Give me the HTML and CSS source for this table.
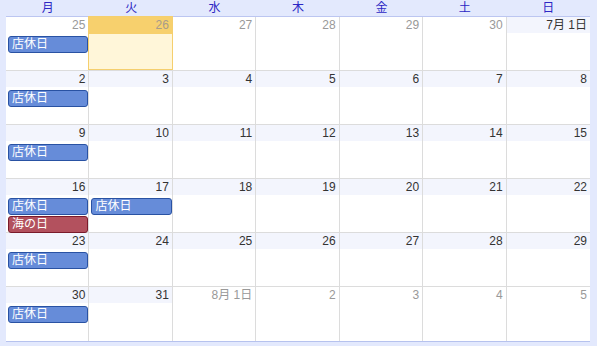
FILE: index.html
```html
<!DOCTYPE html>
<html lang="ja">
<head>
<meta charset="utf-8">
<link rel="stylesheet" href="styles.css">
</head>
<body>
<div class="cal">
  <div class="head">
    <div>月</div><div>火</div><div>水</div><div>木</div><div>金</div><div>土</div><div>日</div>
  </div>
  <div class="grid">
    <div class="week">
      <div class="day other"><div class="num">25</div><div class="ev blue">店休日</div></div>
      <div class="day other today"><div class="num">26</div></div>
      <div class="day other"><div class="num">27</div></div>
      <div class="day other"><div class="num">28</div></div>
      <div class="day other"><div class="num">29</div></div>
      <div class="day other"><div class="num">30</div></div>
      <div class="day"><div class="num">7月 1日</div></div>
    </div>
    <div class="week">
      <div class="day"><div class="num">2</div><div class="ev blue">店休日</div></div>
      <div class="day"><div class="num">3</div></div>
      <div class="day"><div class="num">4</div></div>
      <div class="day"><div class="num">5</div></div>
      <div class="day"><div class="num">6</div></div>
      <div class="day"><div class="num">7</div></div>
      <div class="day"><div class="num">8</div></div>
    </div>
    <div class="week">
      <div class="day"><div class="num">9</div><div class="ev blue">店休日</div></div>
      <div class="day"><div class="num">10</div></div>
      <div class="day"><div class="num">11</div></div>
      <div class="day"><div class="num">12</div></div>
      <div class="day"><div class="num">13</div></div>
      <div class="day"><div class="num">14</div></div>
      <div class="day"><div class="num">15</div></div>
    </div>
    <div class="week">
      <div class="day"><div class="num">16</div><div class="ev blue">店休日</div><div class="ev red">海の日</div></div>
      <div class="day"><div class="num">17</div><div class="ev blue">店休日</div></div>
      <div class="day"><div class="num">18</div></div>
      <div class="day"><div class="num">19</div></div>
      <div class="day"><div class="num">20</div></div>
      <div class="day"><div class="num">21</div></div>
      <div class="day"><div class="num">22</div></div>
    </div>
    <div class="week">
      <div class="day"><div class="num">23</div><div class="ev blue">店休日</div></div>
      <div class="day"><div class="num">24</div></div>
      <div class="day"><div class="num">25</div></div>
      <div class="day"><div class="num">26</div></div>
      <div class="day"><div class="num">27</div></div>
      <div class="day"><div class="num">28</div></div>
      <div class="day"><div class="num">29</div></div>
    </div>
    <div class="week">
      <div class="day"><div class="num">30</div><div class="ev blue">店休日</div></div>
      <div class="day"><div class="num">31</div></div>
      <div class="day other"><div class="num">8月 1日</div></div>
      <div class="day other"><div class="num">2</div></div>
      <div class="day other"><div class="num">3</div></div>
      <div class="day other"><div class="num">4</div></div>
      <div class="day other"><div class="num">5</div></div>
    </div>
  </div>
</div>
</body>
</html>
```
FILE: styles.css
```css
html, body {
  margin: 0;
  padding: 0;
  background: #e3e9fd;
}
body {
  font-family: "Liberation Sans", Arial, "Noto Sans CJK JP", sans-serif;
  font-size: 12px;
  width: 597px;
  height: 346px;
  overflow: hidden;
}
.cal {
  padding: 0 7px 0 6px;
}
.head {
  display: grid;
  grid-template-columns: repeat(7, 1fr);
  height: 15px;
  line-height: 17px;
  color: #2c27c4;
  text-align: center;
  font-size: 12px;
}
.grid {
  background: #fff;
  border-top: 1px solid #bcc6f1;
  border-bottom: 1px solid #b6c2ee;
  margin-top: 1px;
}
.week {
  display: grid;
  grid-template-columns: repeat(7, 1fr);
  height: 54px;
  border-bottom: 1px solid #dcdcdc;
  box-sizing: border-box;
}
.week:last-child {
  border-bottom: none;
  height: 54px;
}
.day {
  border-right: 1px solid #dcdcdc;
  min-width: 0;
  box-sizing: border-box;
}
.day:last-child {
  border-right: none;
}
.num {
  height: 16px;
  line-height: 16px;
  text-align: right;
  padding-right: 3px;
  color: #333;
  background: #f3f5fd;
  font-size: 12px;
}
.other .num {
  color: #999;
  background: #fff;
}
.today {
  background: #fff6d9;
  border: 1px solid #f5cf6e;
  margin-top: -1px;
  margin-left: -1px;
}
.today .num {
  background: #f7d06d;
  color: #a79c8a;
  height: 17px;
  line-height: 17px;
}
.ev {
  margin: 3px 0 0 2px;
  height: 17px;
  line-height: 15px;
  box-sizing: border-box;
  border-radius: 3px;
  color: #fff;
  padding-left: 3px;
  font-size: 12px;
}
.ev + .ev {
  margin-top: 1px;
}
.blue {
  background: #668cd9;
  border: 1px solid #2952a3;
}
.red {
  background: #b3515e;
  border: 1px solid #7a1b2b;
}
```
